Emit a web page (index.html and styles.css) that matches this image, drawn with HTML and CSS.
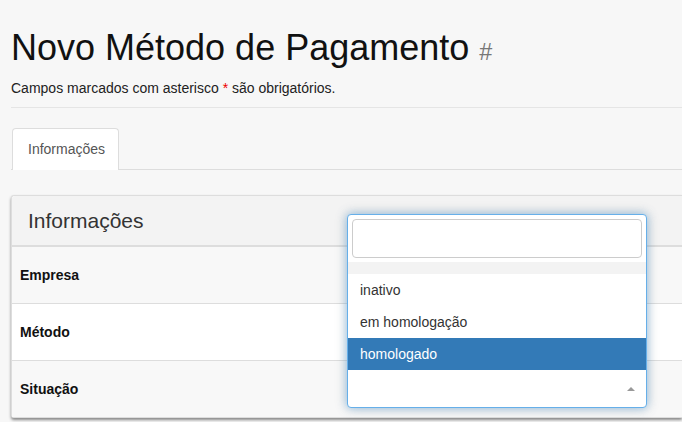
FILE: index.html
```html
<!DOCTYPE html>
<html lang="pt">
<head>
<meta charset="utf-8">
<title>Novo Método de Pagamento</title>
<link rel="stylesheet" href="styles.css">
</head>
<body>
<div class="page">
  <div class="page-header">
    <h1 class="title">Novo Método de Pagamento <small class="hash">#</small></h1>
    <p class="hint">Campos marcados com asterisco <span class="req">*</span> são obrigatórios.</p>
  </div>

  <ul class="tabs">
    <li class="tab active">Informações</li>
  </ul>

  <div class="panel">
    <div class="panel-heading">Informações</div>
    <div class="row striped"><span class="label">Empresa</span></div>
    <div class="row"><span class="label">Método</span></div>
    <div class="row striped last"><span class="label">Situação</span></div>

    <div class="dropdown">
      <div class="search"><div class="search-input"></div></div>
      <div class="placeholder-opt"></div>
      <div class="option">inativo</div>
      <div class="option">em homologação</div>
      <div class="option selected">homologado</div>
      <div class="selection"><span class="arrow"></span></div>
    </div>
  </div>
</div>
</body>
</html>
```
FILE: styles.css
```css
html, body {
  margin: 0;
  padding: 0;
  overflow: hidden;
}
body {
  background: #f7f7f7;
  font-family: "Liberation Sans", Arial, sans-serif;
  font-size: 14px;
  line-height: 20px;
  color: #333;
  width: 682px;
  height: 422px;
}
.page {
  padding-left: 11px;
}
.page-header {
  border-bottom: 1px solid #e5e5e5;
  padding-bottom: 9px;
}
.title {
  margin: 28px 0 0;
  height: 40px;
  font-size: 36px;
  line-height: 40px;
  font-weight: normal;
  color: #111;
}
.hash {
  font-size: 65%;
  line-height: 0;
  color: #777;
}
.hint {
  margin: 10px 0 0;
  height: 20px;
  color: #222;
}
.req {
  color: #e00;
}
.tabs {
  list-style: none;
  margin: 20px 0 0;
  padding: 0;
  display: flex;
  border-bottom: 1px solid #ddd;
}
.tab {
  padding: 10px 13px 11px 15px;
  border: 1px solid #ddd;
  border-bottom: 0;
  border-radius: 4px 4px 0 0;
  background: #fff;
  color: #555;
  margin-bottom: -1px;
  margin-left: 1px;
}
.panel {
  position: relative;
  margin-top: 25px;
  border: 1px solid #ddd;
  border-right: 0;
  border-radius: 3px 0 0 3px;
  background: #fff;
  box-shadow: 0 2px 3px rgba(0,0,0,0.45);
}
.panel-heading {
  height: 49px;
  line-height: 49px;
  padding: 0 16px;
  font-size: 21px;
  background: #f3f3f3;
  border-bottom: 2px solid #ddd;
  border-radius: 3px 0 0 0;
}
.row {
  height: 56px;
  display: flex;
  align-items: center;
  padding-left: 8px;
  border-bottom: 1px solid #ddd;
  background: #fff;
}
.row.striped {
  background: #f8f8f8;
}
.row.last {
  border-bottom: 0;
}
.label {
  font-weight: bold;
  color: #111;
}
.dropdown {
  position: absolute;
  left: 335px;
  top: 18px;
  width: 298px;
  border: 1px solid #66afe9;
  border-radius: 4px;
  background: #fff;
  box-shadow: 0 0 8px rgba(102,175,233,0.6), 0 0 14px rgba(0,0,0,0.18);
  overflow: hidden;
}
.search {
  padding: 4px;
}
.search-input {
  height: 37px;
  border: 1px solid #ccc;
  border-radius: 4px;
  background: #fff;
}
.placeholder-opt {
  height: 12px;
  background: #f3f3f3;
}
.option {
  height: 32px;
  line-height: 32px;
  padding: 0 12px;
  color: #333;
}
.option.selected {
  background: #337ab7;
  color: #fff;
}
.selection {
  height: 37px;
  display: flex;
  align-items: center;
  justify-content: flex-end;
  padding-right: 11px;
}
.arrow {
  width: 0;
  height: 0;
  border-style: solid;
  border-width: 0 4px 4px 4px;
  border-color: transparent transparent #999 transparent;
}
```
